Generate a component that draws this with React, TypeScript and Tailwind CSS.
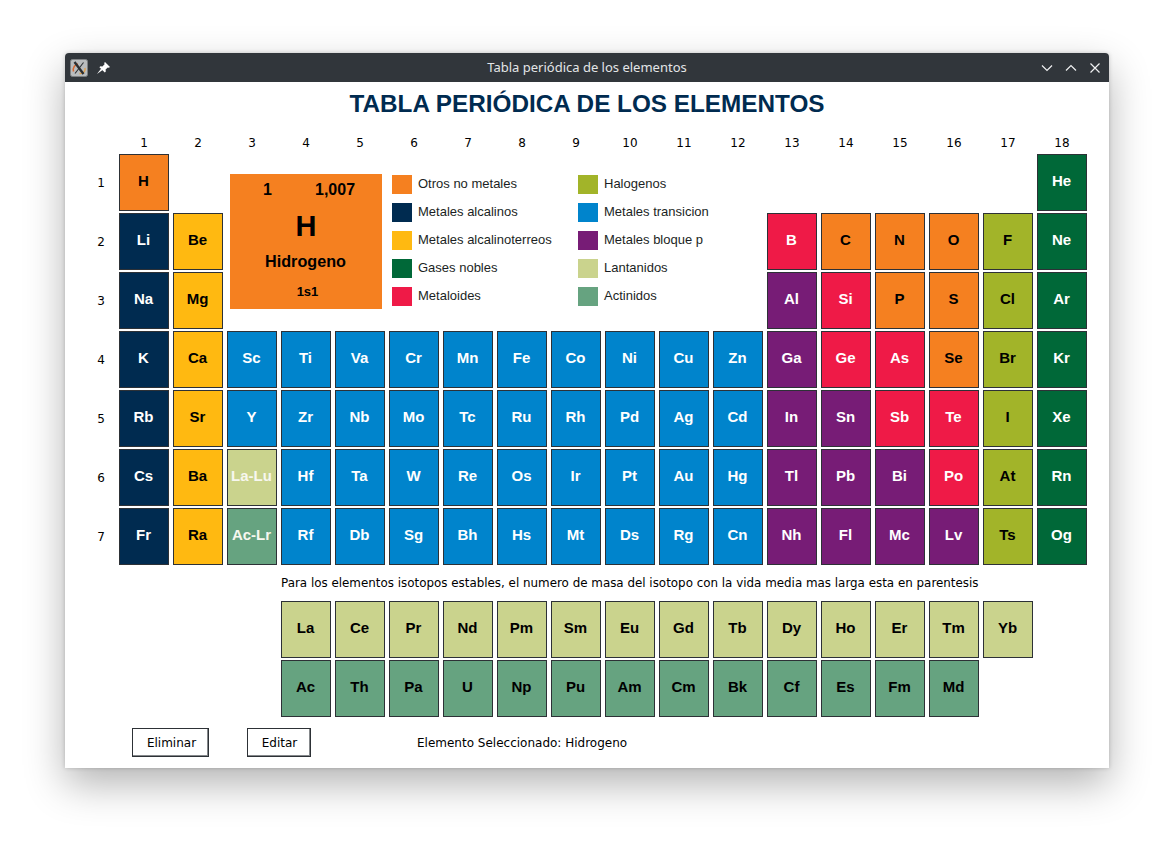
const sans = "font-['Liberation_Sans',Arial,sans-serif]"
const dejavu = "font-['DejaVu_Sans',Verdana,sans-serif]"

type Kind = 'nm' | 'alk' | 'ae' | 'gas' | 'mtd' | 'hal' | 'tm' | 'pb' | 'lan' | 'act'

const fill: Record<Kind, string> = {
  nm: 'bg-[#f58020] text-black',
  alk: 'bg-[#002b50] text-white',
  ae: 'bg-[#ffb911] text-black',
  gas: 'bg-[#006838] text-white',
  mtd: 'bg-[#ef1a47] text-white',
  hal: 'bg-[#a2b429] text-black',
  tm: 'bg-[#0084cc] text-white',
  pb: 'bg-[#771c76] text-white',
  lan: 'bg-[#cad38d] text-black',
  act: 'bg-[#66a380] text-black',
}

// [symbol, kind, group, period]
const elements: [string, Kind, number, number][] = [
  ['H', 'nm', 1, 1], ['He', 'gas', 18, 1],
  ['Li', 'alk', 1, 2], ['Be', 'ae', 2, 2], ['B', 'mtd', 13, 2], ['C', 'nm', 14, 2], ['N', 'nm', 15, 2], ['O', 'nm', 16, 2], ['F', 'hal', 17, 2], ['Ne', 'gas', 18, 2],
  ['Na', 'alk', 1, 3], ['Mg', 'ae', 2, 3], ['Al', 'pb', 13, 3], ['Si', 'mtd', 14, 3], ['P', 'nm', 15, 3], ['S', 'nm', 16, 3], ['Cl', 'hal', 17, 3], ['Ar', 'gas', 18, 3],
]

const rest: [Kind[], string[]][] = [
  [['alk', 'ae', 'tm', 'tm', 'tm', 'tm', 'tm', 'tm', 'tm', 'tm', 'tm', 'tm', 'pb', 'mtd', 'mtd', 'nm', 'hal', 'gas'],
    ['K', 'Ca', 'Sc', 'Ti', 'Va', 'Cr', 'Mn', 'Fe', 'Co', 'Ni', 'Cu', 'Zn', 'Ga', 'Ge', 'As', 'Se', 'Br', 'Kr']],
  [['alk', 'ae', 'tm', 'tm', 'tm', 'tm', 'tm', 'tm', 'tm', 'tm', 'tm', 'tm', 'pb', 'pb', 'mtd', 'mtd', 'hal', 'gas'],
    ['Rb', 'Sr', 'Y', 'Zr', 'Nb', 'Mo', 'Tc', 'Ru', 'Rh', 'Pd', 'Ag', 'Cd', 'In', 'Sn', 'Sb', 'Te', 'I', 'Xe']],
  [['alk', 'ae', 'lan', 'tm', 'tm', 'tm', 'tm', 'tm', 'tm', 'tm', 'tm', 'tm', 'pb', 'pb', 'pb', 'mtd', 'hal', 'gas'],
    ['Cs', 'Ba', 'La-Lu', 'Hf', 'Ta', 'W', 'Re', 'Os', 'Ir', 'Pt', 'Au', 'Hg', 'Tl', 'Pb', 'Bi', 'Po', 'At', 'Rn']],
  [['alk', 'ae', 'act', 'tm', 'tm', 'tm', 'tm', 'tm', 'tm', 'tm', 'tm', 'tm', 'pb', 'pb', 'pb', 'pb', 'hal', 'gas'],
    ['Fr', 'Ra', 'Ac-Lr', 'Rf', 'Db', 'Sg', 'Bh', 'Hs', 'Mt', 'Ds', 'Rg', 'Cn', 'Nh', 'Fl', 'Mc', 'Lv', 'Ts', 'Og']],
]

rest.forEach(([kinds, syms], i) => {
  syms.forEach((s, j) => elements.push([s, kinds[j], j + 1, i + 4]))
})

const lanthanides = ['La', 'Ce', 'Pr', 'Nd', 'Pm', 'Sm', 'Eu', 'Gd', 'Tb', 'Dy', 'Ho', 'Er', 'Tm', 'Yb']
const actinides = ['Ac', 'Th', 'Pa', 'U', 'Np', 'Pu', 'Am', 'Cm', 'Bk', 'Cf', 'Es', 'Fm', 'Md']

const legendLeft: [string, Kind][] = [
  ['Otros no metales', 'nm'], ['Metales alcalinos', 'alk'], ['Metales alcalinoterreos', 'ae'], ['Gases nobles', 'gas'], ['Metaloides', 'mtd'],
]
const legendRight: [string, Kind][] = [
  ['Halogenos', 'hal'], ['Metales transicion', 'tm'], ['Metales bloque p', 'pb'], ['Lantanidos', 'lan'], ['Actinidos', 'act'],
]

function Cell({ sym, kind }: { sym: string; kind: Kind }) {
  const light = sym === 'La-Lu' || sym === 'Ac-Lr'
  return (
    <div
      className={`w-[50px] h-[57px] border border-[#2d3136] flex items-center justify-center pb-[3px] pr-[1px] text-[15px] font-bold whitespace-nowrap ${sans} ${fill[kind]} ${light ? '!text-[#f7f7ef]' : ''}`}
    >
      {sym}
    </div>
  )
}

function Legend({ items }: { items: [string, Kind][] }) {
  return (
    <div className="flex flex-col gap-[9px]">
      {items.map(([label, kind]) => (
        <div key={label} className="flex items-center h-[19px] gap-[6px]">
          <div className={`w-[20px] h-[19px] ${fill[kind]}`} />
          <span className={`text-[13px] leading-none pb-[2px] text-[#1b1f24] ${sans}`}>{label}</span>
        </div>
      ))}
    </div>
  )
}

function XIcon() {
  return (
    <svg width="18" height="18" viewBox="0 0 18 18">
      <rect x="0.5" y="0.5" width="17" height="17" rx="2" fill="#b9bcbe" stroke="#7d8083" />
      <path d="M3.5 12.5C2.5 8.5 5 5.5 8 5" fill="none" stroke="#d9682f" strokeWidth="1.5" />
      <path d="M15 9c.8 3-1.500 6-5.500 5.500" fill="none" stroke="#e2a04a" strokeWidth="1.4" />
      <path d="M4.500 3l9 12" stroke="#2b2f33" strokeWidth="2.4" />
      <path d="M13.500 3.500L5 14.500" stroke="#2b2f33" strokeWidth="1.1" />
    </svg>
  )
}

function PinIcon() {
  return (
    <svg width="13" height="12" viewBox="0 0 13 12" fill="#fff">
      <path d="M8 0l5 5-1.200.8-1-.4-2.200 2.200.2 2-1 1-5.400-5.400 1-1 2 .2 2.200-2.200-.4-1.200z" />
      <path d="M0 12l4.200-5.400 1.400 1.400z" />
    </svg>
  )
}

export default function App() {
  return (
    <div className="w-[1174px] h-[845px] bg-white pt-[53px] pl-[65px] overflow-hidden">
      <div className="w-[1044px] h-[715px] bg-white rounded-t-[4px] shadow-[0_0_4px_rgba(0,0,0,0.18),0_16px_40px_rgba(0,0,0,0.3)] flex flex-col">
        {/* title bar */}
        <div className="h-[29px] shrink-0 bg-[#31363b] rounded-t-[4px] flex items-center pl-[5px] pr-[7px] relative">
          <XIcon />
          <div className="ml-[9px]">
            <PinIcon />
          </div>
          <div className="absolute inset-0 flex items-center justify-center text-[13px] text-[#e3e5e7] font-['Noto_Sans',sans-serif]">
            Tabla periódica de los elementos
          </div>
          <div className="ml-auto flex items-center gap-[10px] text-white">
            <svg width="14" height="14" viewBox="0 0 14 14" fill="none" stroke="#eff0f1" strokeWidth="1.2">
              <path d="M2 4.500l5 5 5-5" />
            </svg>
            <svg width="14" height="14" viewBox="0 0 14 14" fill="none" stroke="#eff0f1" strokeWidth="1.2">
              <path d="M2 9.500l5-5 5 5" />
            </svg>
            <svg width="14" height="14" viewBox="0 0 14 14" fill="none" stroke="#eff0f1" strokeWidth="1.2">
              <path d="M2.500 2.500l9 9M11.500 2.500l-9 9" />
            </svg>
          </div>
        </div>

        <h1 className={`text-center text-[24.3px] leading-[28px] font-bold text-[#002b50] mt-[8px] mb-[15px] ${sans}`}>
          TABLA PERIÓDICA DE LOS ELEMENTOS
        </h1>

        {/* main table */}
        <div className={`grid grid-cols-[28px_repeat(18,50px)] grid-rows-[19px_repeat(7,57px)] gap-x-[4px] gap-y-[2px] ml-[22px] text-[12px] text-black ${dejavu}`}>
          {Array.from({ length: 18 }, (_, i) => (
            <div key={i} className="flex items-center justify-center pt-[1px]" style={{ gridColumn: i + 2, gridRow: 1 }}>
              {i + 1}
            </div>
          ))}
          {Array.from({ length: 7 }, (_, i) => (
            <div key={i} className="flex items-center justify-center" style={{ gridColumn: 1, gridRow: i + 2 }}>
              {i + 1}
            </div>
          ))}
          {elements.map(([sym, kind, group, period]) => (
            <div key={sym} style={{ gridColumn: group + 1, gridRow: period + 1 }}>
              <Cell sym={sym} kind={kind} />
            </div>
          ))}

          {/* selected element */}
          <div className={`col-start-4 col-span-3 row-start-2 row-span-3 mx-[3px] mt-[20px] h-[135px] bg-[#f58020] text-black font-bold flex flex-col items-center ${sans}`}>
            <div className="w-full flex text-[16px] leading-[18px] pt-[7px]">
              <span className="ml-[33px] w-[52px]">1</span>
              <span>1,007</span>
            </div>
            <div className="text-[29px] leading-[34px] mt-[10px]">H</div>
            <div className="text-[16.2px] leading-[18px] mt-[9px] ml-[-1px]">Hidrogeno</div>
            <div className="text-[13px] leading-[14px] mt-[15px] ml-[3px]">1s1</div>
          </div>

          {/* legend */}
          <div className="col-start-7 col-span-8 row-start-2 row-span-3 flex pt-[21px] ml-[3px]">
            <div className="w-[186px]">
              <Legend items={legendLeft} />
            </div>
            <Legend items={legendRight} />
          </div>
        </div>

        <p className={`text-[11.9px] leading-[14px] text-black ml-[216px] mt-[11px] mb-[11px] ${dejavu}`}>
          Para los elementos isotopos estables, el numero de masa del isotopo con la vida media mas larga esta en parentesis
        </p>

        {/* f block */}
        <div className="flex flex-col gap-[2px] ml-[216px]">
          <div className="flex gap-[4px]">
            {lanthanides.map((s) => (
              <Cell key={s} sym={s} kind="lan" />
            ))}
          </div>
          <div className="flex gap-[4px]">
            {actinides.map((s) => (
              <Cell key={s} sym={s} kind="act" />
            ))}
          </div>
        </div>

        {/* footer */}
        <div className={`flex items-center h-[29px] mt-[11px] ml-[67px] text-[12px] text-black ${dejavu}`}>
          <button className="w-[77px] h-[29px] pl-[2px] border border-[#2d3136] bg-white shadow-[inset_-1px_-1px_0_#85888b]">Eliminar</button>
          <button className="w-[64px] h-[29px] pl-[1px] ml-[38px] border border-[#2d3136] bg-white shadow-[inset_-1px_-1px_0_#85888b]">Editar</button>
          <span className="ml-[106px]">Elemento Seleccionado: Hidrogeno</span>
        </div>
      </div>
    </div>
  )
}
